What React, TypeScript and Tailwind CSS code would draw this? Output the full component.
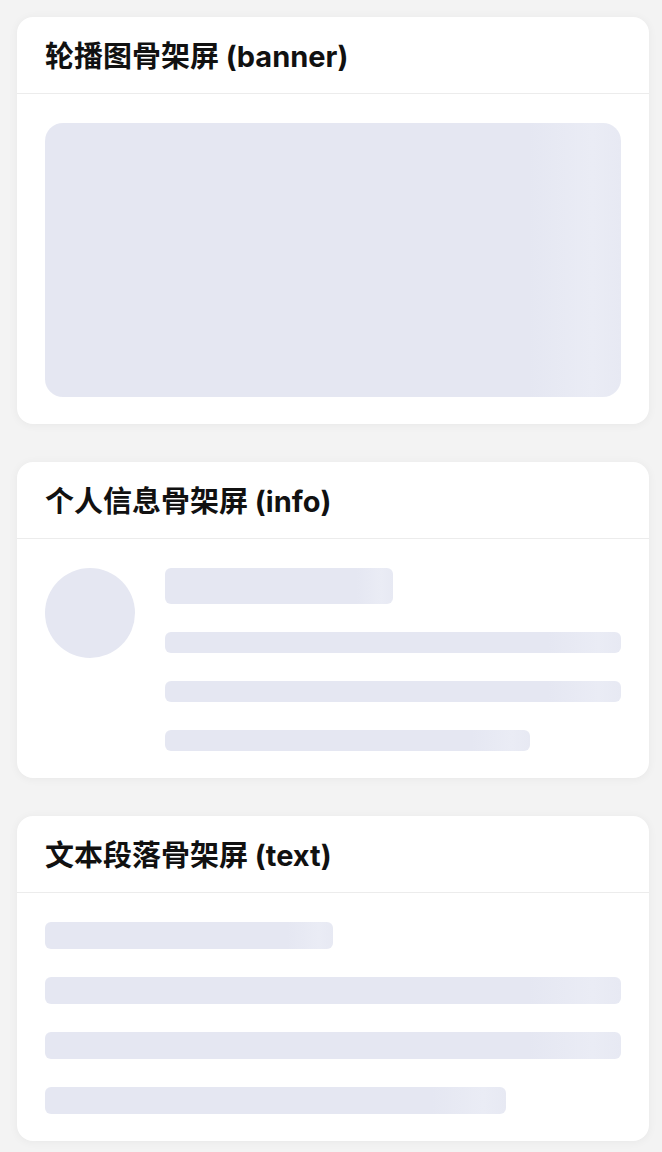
import React from "react";

const sk =
  "bg-[linear-gradient(90deg,#e5e7f2_0%,#e5e7f2_84%,#eaecf5_95%,#e7e9f3_100%)]";

function Card({ title, children }: { title: string; children: React.ReactNode }) {
  return (
    <div className="w-[632px] rounded-[16px] bg-white shadow-[0_1px_10px_rgba(0,0,0,0.05)]">
      <div className="flex h-[77px] items-center border-b border-[#ececec] px-7 pt-[2px]">
        <h2 className="text-[29px] font-bold leading-none text-[#111] [font-family:Inter,'Noto_Sans_CJK_SC',sans-serif]">
          {title}
        </h2>
      </div>
      <div className="px-7 pt-[29px] pb-[27px]">{children}</div>
    </div>
  );
}

export default function App() {
  return (
    <div className="min-h-[1152px] bg-[#f3f3f3] pt-[17px] pl-[17px] pr-[13px] pb-4">
      <div className="flex flex-col gap-[38px]">
        <Card title="轮播图骨架屏 (banner)">
          <div className={`h-[274px] w-full rounded-[18px] ${sk}`} />
        </Card>
        <Card title="个人信息骨架屏 (info)">
          <div className="flex gap-[30px]">
            <div className="h-[90px] w-[90px] shrink-0 rounded-full bg-[#e5e7f2]" />
            <div className="flex flex-1 flex-col gap-[28px]">
              <div className={`h-[36px] w-1/2 rounded-[6px] ${sk}`} />
              <div className={`h-[21px] w-full rounded-[6px] ${sk}`} />
              <div className={`h-[21px] w-full rounded-[6px] ${sk}`} />
              <div className={`h-[21px] w-4/5 rounded-[6px] ${sk}`} />
            </div>
          </div>
        </Card>
        <Card title="文本段落骨架屏 (text)">
          <div className="flex flex-col gap-[28px]">
            <div className={`h-[27px] w-1/2 rounded-[6px] ${sk}`} />
            <div className={`h-[27px] w-full rounded-[6px] ${sk}`} />
            <div className={`h-[27px] w-full rounded-[6px] ${sk}`} />
            <div className={`h-[27px] w-4/5 rounded-[6px] ${sk}`} />
          </div>
        </Card>
      </div>
    </div>
  );
}
